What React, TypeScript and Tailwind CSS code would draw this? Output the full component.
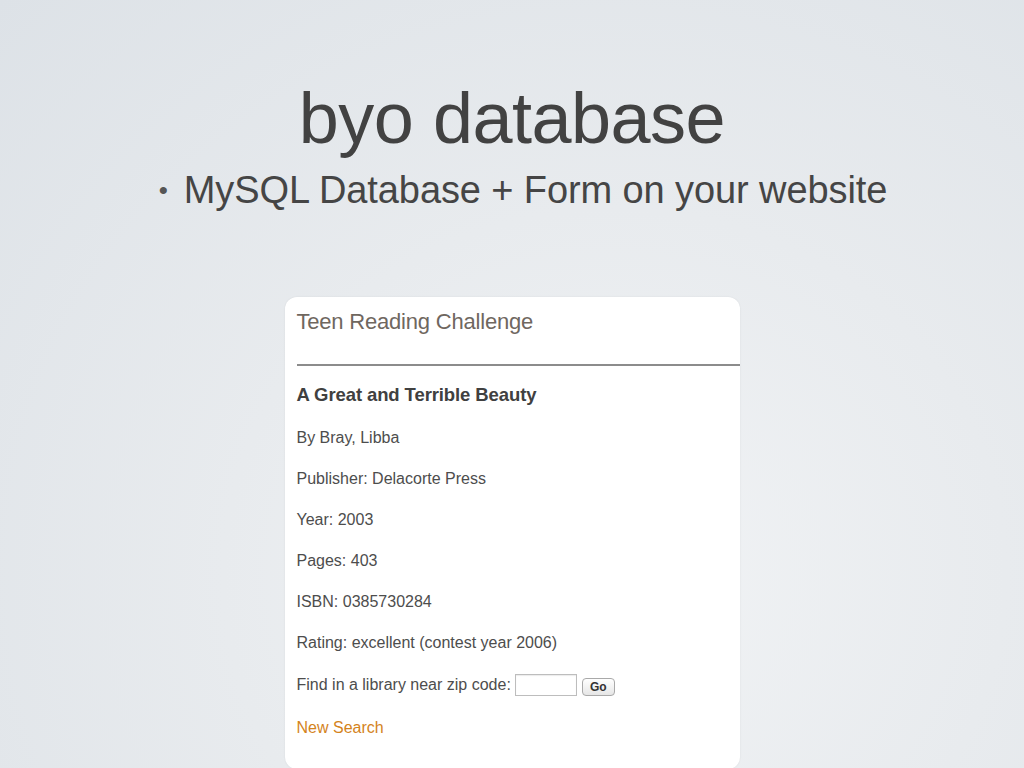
import React from "react";

export default function App() {
  return (
    <div
      className="w-full h-[768px] overflow-hidden flex flex-col items-center bg-[radial-gradient(ellipse_at_60%_75%,#f1f3f5_0%,#e8ebee_45%,#dde2e7_100%)]"
      style={{ fontFamily: '"Liberation Sans", Arial, sans-serif' }}
    >
      <h1 className="mt-[82px] text-[72px] leading-[72px] text-[#424242] tracking-[-0.5px]">
        byo database
      </h1>
      <div className="mt-[17px] ml-[22px] flex items-start text-[38px] leading-[38px] text-[#454545] tracking-[-0.1px]">
        <span className="w-[25px] text-[26px] leading-[38px] text-[#555]">•</span>
        <span>MySQL Database + Form on your website</span>
      </div>

      <div className="mt-[88px] w-[455px] h-[472px] shrink-0 bg-white rounded-[12px] shadow-[0_0_2px_rgba(0,0,0,0.08)] flex flex-col">
        <div className="pl-[12px] pt-[12px] h-[26px] box-content text-[22px] leading-[26px] text-[#6f675f] tracking-[-0.2px]">
          Teen Reading Challenge
        </div>
        <div className="ml-[12px] mt-[29px] h-[2px] bg-[#8c8c8c]" />
        <div className="pl-[12px] pt-[8px] flex flex-col text-[16px] text-[#4d4d4d]">
          <div className="h-[41px] flex items-center text-[18.5px] font-bold text-[#404040] tracking-[-0.1px]">
            A Great and Terrible Beauty
          </div>
          <div className="mt-[2px] h-[41px] flex items-center">By Bray, Libba</div>
          <div className="h-[41px] flex items-center">Publisher: Delacorte Press</div>
          <div className="h-[41px] flex items-center">Year: 2003</div>
          <div className="h-[41px] flex items-center">Pages: 403</div>
          <div className="h-[41px] flex items-center">ISBN: 0385730284</div>
          <div className="h-[41px] flex items-center">Rating: excellent (contest year 2006)</div>
          <div className="h-[44px] flex items-center">
            <span>Find in a library near zip code:</span>
            <span className="ml-[4px] w-[62px] h-[22px] border border-[#bdbdbd] shadow-[inset_0_1px_1px_rgba(0,0,0,0.08)] bg-white" />
            <span className="ml-[5px] mt-[4px] w-[33px] h-[18px] rounded-[4px] border border-[#a9a9a9] bg-[linear-gradient(#ffffff,#e6e6e6)] flex items-center justify-center text-[12px] font-bold text-[#333] leading-none">
              Go
            </span>
          </div>
          <div className="h-[41px] flex items-center text-[#d4831c]">New Search</div>
        </div>
      </div>
    </div>
  );
}
